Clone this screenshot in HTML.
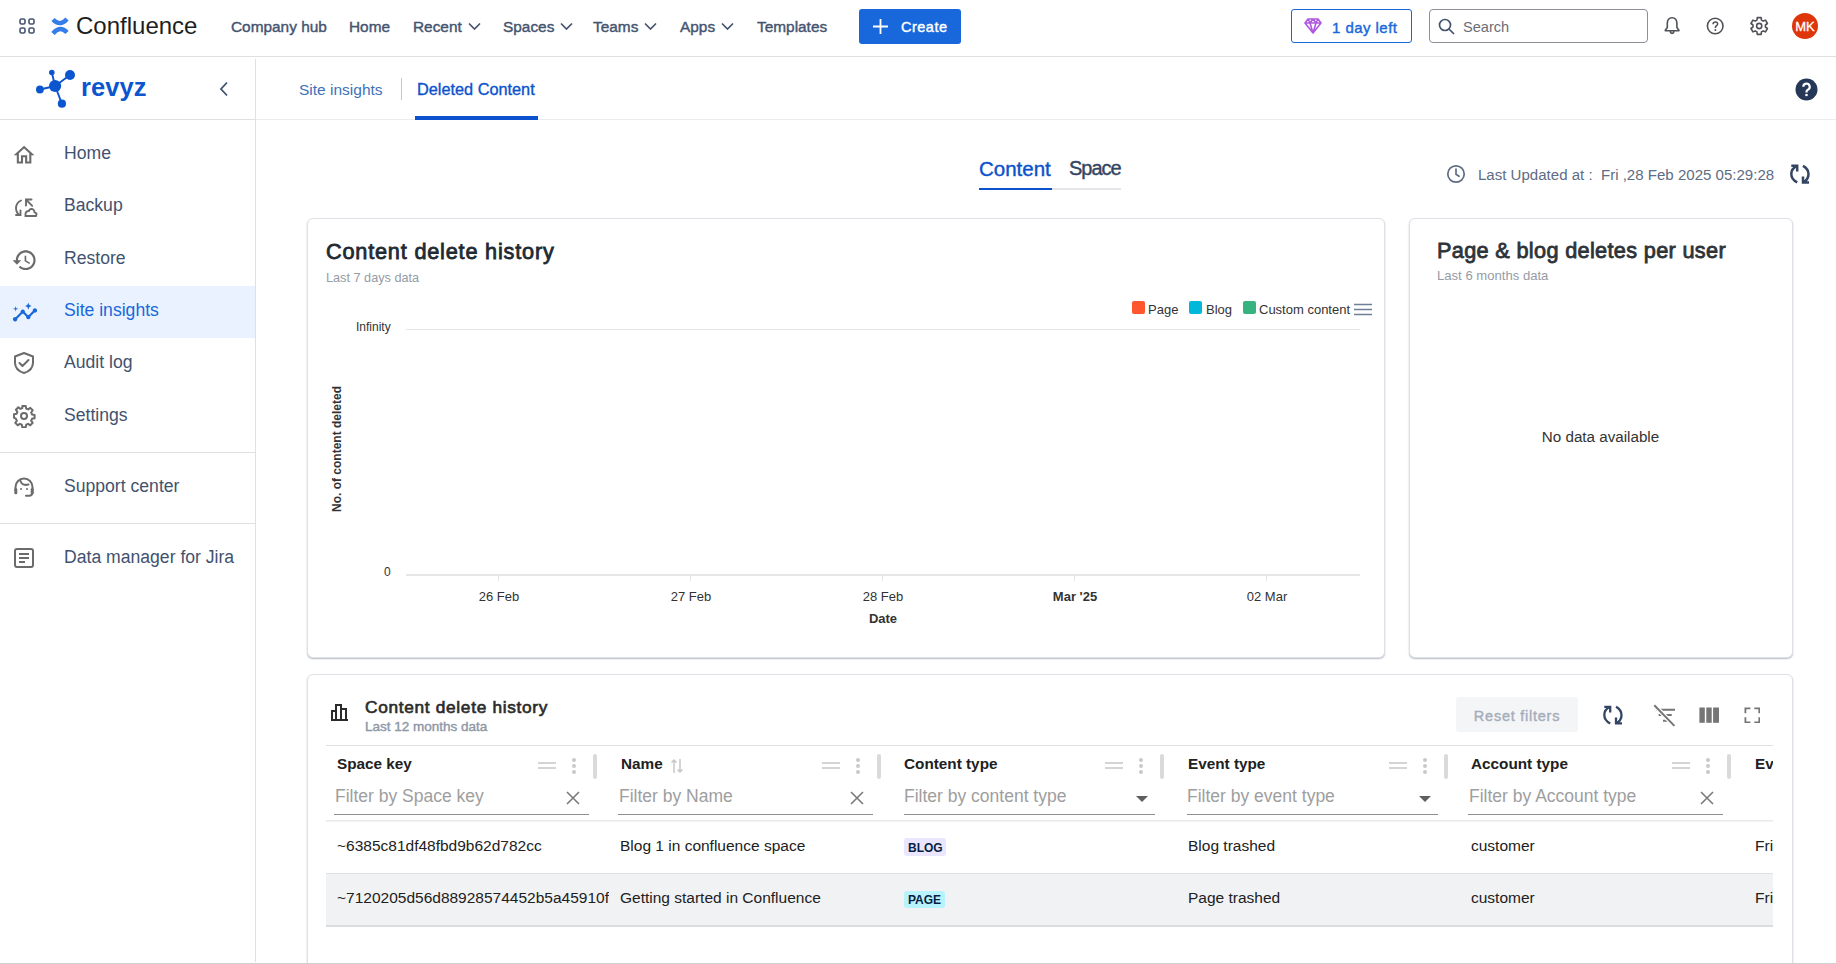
<!DOCTYPE html>
<html><head><meta charset="utf-8">
<style>
*{box-sizing:border-box;margin:0;padding:0}
html,body{width:1836px;height:964px;overflow:hidden;background:#fff;font-family:"Liberation Sans",sans-serif;color:#172B4D}
.abs{position:absolute}
.top{position:absolute;left:0;top:0;width:1836px;height:57px;border-bottom:1px solid #E0E0E0;background:#fff}
.nav{position:absolute;top:18px;font-size:15.4px;color:#44546F;white-space:nowrap;-webkit-text-stroke:0.4px #44546F}
.m{-webkit-text-stroke:0.4px currentColor}
.chev{display:inline-block;margin-left:6px;vertical-align:2px}
.side{position:absolute;left:0;top:57px;width:256px;height:907px}
.side:after{content:"";position:absolute;left:255px;top:2px;width:1px;height:903px;background:#E0E0E0}
.item{position:absolute;left:0;width:255px;height:52px;font-size:17.6px;color:#42526E}
.item span{position:absolute;left:64px;top:15px}
.item svg{position:absolute;left:12px;top:14px}
.card{position:absolute;border:1px solid #DFE1E6;border-radius:6px;background:#fff;box-shadow:0 1px 1.5px rgba(9,30,66,0.3)}
.th{position:absolute;top:755px;font-size:15.3px;font-weight:bold;color:#212121;white-space:nowrap}
.ph{position:absolute;top:786px;font-size:17.5px;color:#9E9E9E;white-space:nowrap}
.td{position:absolute;font-size:15.5px;color:#212121;white-space:nowrap}
</style></head><body>
<!-- TOP NAV -->
<div class="top">
  <svg class="abs" style="left:19px;top:18px" width="16" height="16" viewBox="0 0 16 16" fill="none" stroke="#44546F" stroke-width="1.6"><rect x="1" y="1" width="5" height="5" rx="1.5"/><rect x="10" y="1" width="5" height="5" rx="1.5"/><rect x="1" y="10" width="5" height="5" rx="1.5"/><rect x="10" y="10" width="5" height="5" rx="1.5"/></svg>
  <svg class="abs" style="left:48px;top:14px" width="24" height="24" viewBox="0 0 24 24" fill="none" stroke="#357DE8" stroke-width="4.4"><path d="M5 5.5Q12 13 19 5M5 19.5Q12 11 19 18.5"/></svg>
  <div class="abs" style="left:76px;top:12px;font-size:24px;color:#1E1F21">Confluence</div>
  <div class="nav" style="left:231px">Company hub</div>
  <div class="nav" style="left:349px">Home</div>
  <div class="nav" style="left:413px">Recent<svg class="chev" width="13" height="8" viewBox="0 0 13 8" fill="none" stroke="#44546F" stroke-width="1.7"><path d="M1 1.5 6.5 7 12 1.5"/></svg></div>
  <div class="nav" style="left:503px">Spaces<svg class="chev" width="13" height="8" viewBox="0 0 13 8" fill="none" stroke="#44546F" stroke-width="1.7"><path d="M1 1.5 6.5 7 12 1.5"/></svg></div>
  <div class="nav" style="left:593px">Teams<svg class="chev" width="13" height="8" viewBox="0 0 13 8" fill="none" stroke="#44546F" stroke-width="1.7"><path d="M1 1.5 6.5 7 12 1.5"/></svg></div>
  <div class="nav" style="left:680px">Apps<svg class="chev" width="13" height="8" viewBox="0 0 13 8" fill="none" stroke="#44546F" stroke-width="1.7"><path d="M1 1.5 6.5 7 12 1.5"/></svg></div>
  <div class="nav" style="left:757px">Templates</div>
  <div class="abs" style="left:859px;top:9px;width:102px;height:35px;background:#1868DB;border-radius:3px"></div>
  <svg class="abs" style="left:872px;top:18px" width="17" height="17" viewBox="0 0 17 17" stroke="#fff" stroke-width="1.8"><path d="M8.5 1v15M1 8.5h15"/></svg>
  <div class="abs m" style="left:901px;top:19px;font-size:14.5px;letter-spacing:0.5px;color:#fff">Create</div>

  <div class="abs" style="left:1291px;top:9px;width:121px;height:34px;border:1px solid #1868DB;border-radius:3px"></div>
  <svg class="abs" style="left:1304px;top:18px" width="18" height="16" viewBox="0 0 18 16" fill="none" stroke="#AF59E1" stroke-width="1.6" stroke-linejoin="round"><path d="M4 1h10l3 4-8 10L1 5z M1 5h16 M6 5l3 10 3-10 M4 1l2 4 3-4 3 4 2-4"/></svg>
  <div class="abs m" style="left:1332px;top:19px;font-size:15px;letter-spacing:0.45px;color:#1868DB">1 day left</div>

  <div class="abs" style="left:1429px;top:9px;width:219px;height:34px;border:1px solid #8C8F97;border-radius:4px"></div>
  <svg class="abs" style="left:1438px;top:18px" width="17" height="17" viewBox="0 0 17 17" fill="none" stroke="#44546F" stroke-width="1.7"><circle cx="7" cy="7" r="5.5"/><path d="M11 11l5 5"/></svg>
  <div class="abs" style="left:1463px;top:19px;font-size:14.6px;color:#6B6E76">Search</div>

  <svg class="abs" style="left:1663px;top:16px" width="19" height="20" viewBox="0 0 19 20" fill="none" stroke="#505258" stroke-width="1.6" stroke-linejoin="round"><path d="M9.1 1.8C6 1.8 4.3 4 4.3 7.3V11.5L2.3 14.2V14.8H15.9V14.2L13.9 11.5V7.3C13.9 4 12.2 1.8 9.1 1.8Z M7.4 15.6C7.4 17.9 10.8 17.9 10.8 15.6"/></svg>
  <svg class="abs" style="left:1705px;top:16px" width="20" height="20" viewBox="0 0 20 20" fill="none" stroke="#505258" stroke-width="1.6"><circle cx="10.2" cy="10" r="7.8"/><path d="M8 8.2C8 6.8 9 5.9 10.3 5.9 11.7 5.9 12.7 6.8 12.7 8.1 12.7 9.6 10.5 9.8 10.4 11.4V12" stroke-width="1.5"/><circle cx="10.35" cy="14" r="1" fill="#505258" stroke="none"/></svg>
  <svg class="abs" style="left:1749px;top:16px" width="21" height="20" viewBox="0 0 21 20" fill="none" stroke="#505258" stroke-width="1.6" stroke-linejoin="round"><path d="M8.27 1.62 L12.13 1.62 L12.46 4.12 L14.16 5.10 L16.49 4.13 L18.42 7.49 L16.42 9.01 L16.42 10.99 L18.42 12.51 L16.49 15.87 L14.16 14.90 L12.46 15.88 L12.13 18.38 L8.27 18.38 L7.94 15.88 L6.24 14.90 L3.91 15.87 L1.98 12.51 L3.98 10.99 L3.98 9.01 L1.98 7.49 L3.91 4.13 L6.24 5.10 L7.94 4.12Z"/><circle cx="10.2" cy="10" r="2.6"/></svg>
  <div class="abs m" style="left:1792px;top:13px;width:26px;height:26px;border-radius:50%;background:#DE350B;color:#fff;font-size:13px;text-align:center;line-height:27px;-webkit-text-stroke:0.3px #fff">MK</div>
</div>

<!-- SIDEBAR -->
<div class="side">
  <div class="abs" style="left:0;top:62px;width:255px;height:1px;background:#E0E0E0"></div>
  <svg class="abs" style="left:30px;top:7px" width="48" height="48" viewBox="30 64 48 48">
    <g stroke="#0B55CF" stroke-width="1.9"><path d="M55.1 86 L51.8 72.5 M55.1 86 L70 75 M55.1 86 L39.9 89.5 M55.1 86 L61.9 103.7"/></g>
    <g fill="#0B55CF"><circle cx="55.1" cy="86" r="6.1"/><circle cx="51.8" cy="72.5" r="2.8"/><circle cx="70" cy="75" r="5"/><circle cx="39.9" cy="89.5" r="3.9"/><circle cx="61.9" cy="103.7" r="4.1"/></g>
  </svg>
  <div class="abs" style="left:81px;top:16.3px;font-size:25.5px;font-weight:bold;color:#0B55CF;letter-spacing:0.1px">revyz</div>
  <svg class="abs" style="left:218px;top:24px" width="12" height="16" viewBox="0 0 12 16" fill="none" stroke="#42526E" stroke-width="1.8"><path d="M9 1.5 3 8l6 6.5"/></svg>

  <div class="item" style="top:71px"><svg width="24" height="24" viewBox="0 0 24 24" fill="#6B6B6B"><g transform="translate(-0.4,0.7) scale(1.04)"><path d="M12 5.69l5 4.5V18h-2v-6H9v6H7v-7.81l5-4.5M12 3L2 12h3v8h6v-6h2v6h6v-8h3L12 3z"/></g></svg><span>Home</span></div>
  <div class="item" style="top:123px"><svg style="left:13px;top:16px" width="26" height="24" viewBox="0 0 26 24" fill="none" stroke="#6B6B6B" stroke-width="1.9" stroke-linecap="round"><path d="M8 4.5C4.5 6 3 9 3 12.5c0 2.5 1 4.5 2.5 6 M3 19h4.5v-4.5 M13 9.5V3.5h5.5 M13.2 3.8l6 6 M12.5 20h10.5c1-1.5.5-3.5-1.5-3.8 0-2.3-1.8-3.5-3.5-3.2-1 .2-2 1-2.2 2-1.8-.2-3.3 1.3-3.3 3z"/></svg><span>Backup</span></div>
  <div class="item" style="top:176px"><svg width="26" height="26" viewBox="0 0 26 26" fill="#6B6B6B"><g transform="translate(-0.6,0) scale(1.1)"><path d="M13 3c-4.97 0-9 4.03-9 9H1l3.89 3.89.07.14L9 12H6c0-3.87 3.13-7 7-7s7 3.13 7 7-3.13 7-7 7c-1.93 0-3.68-.79-4.94-2.06l-1.42 1.42C8.27 19.990 10.51 21 13 21c4.97 0 9-4.030 9-9s-4.03-9-9-9zm-1 5v5l4.28 2.54.72-1.21-3.5-2.08V8H12z"/></g></svg><span>Restore</span></div>
  <div class="item" style="top:229px;background:#E9F2FE;color:#1868DB"><svg width="26" height="24" viewBox="0 0 26 24" fill="#1868DB"><g transform="translate(-0.2,-0.5) scale(1.1)"><path d="M21 8c-1.45 0-2.26 1.44-1.93 2.51l-3.55 3.56c-.3-.09-.74-.09-1.04 0l-2.55-2.55C12.270 10.45 11.46 9 10 9c-1.45 0-2.27 1.44-1.930 2.52l-4.56 4.55C2.44 15.74 1 16.55 1 18c0 1.1.9 2 2 2 1.45 0 2.26-1.44 1.93-2.51l4.55-4.56c.3.09.74.09 1.04 0l2.550 2.55C12.73 16.55 13.54 18 15 18c1.45 0 2.27-1.44 1.93-2.52l3.56-3.55c1.07.33 2.51-.48 2.51-1.93 0-1.1-.9-2-2-2z"/><path d="M15 9l.94-2.07L18 6l-2.06-.93L15 3l-.92 2.07L12 6l2.08.93z M3.5 11L4 9l2-.5L4 8l-.5-2L3 8l-2 .5L3 9z"/></g></svg><span style="top:14px">Site insights</span></div>
  <div class="item" style="top:280px"><svg width="24" height="24" viewBox="0 0 24 24" fill="none" stroke="#6B6B6B" stroke-width="2" stroke-linejoin="round" stroke-linecap="round"><path d="M12 2 3 5.5v6c0 5.5 4 9 9 10.5 5-1.5 9-5 9-10.5v-6z M7.5 12l3 3 6-6"/></svg><span>Audit log</span></div>
  <div class="item" style="top:333px"><svg width="24" height="24" viewBox="0 0 24 24" fill="none" stroke="#6B6B6B" stroke-width="2"><circle cx="12" cy="12" r="3"/><path d="M10.3 2h3.4l.5 2.6 1.9.8 2.2-1.5 2.4 2.4-1.5 2.2.8 1.9 2.6.5v3.4l-2.6.5-.8 1.9 1.5 2.2-2.4 2.4-2.2-1.5-1.9.8-.5 2.6h-3.4l-.5-2.6-1.9-.8-2.2 1.5-2.4-2.4 1.5-2.2-.8-1.9L2 13.7v-3.4l2.6-.5.8-1.9-1.5-2.2 2.4-2.4 2.2 1.5 1.9-.8z" stroke-linejoin="round"/></svg><span>Settings</span></div>
  <div class="abs" style="left:0;top:395px;width:255px;height:1px;background:#E0E0E0"></div>
  <div class="item" style="top:404px"><svg width="24" height="24" viewBox="0 0 24 24" fill="none" stroke="#6B6B6B" stroke-width="2" stroke-linecap="round"><path d="M3.5 15v-3a8.5 8.5 0 0 1 17 0v3 M20.5 17c0 2.3-1.3 3.7-3.5 3.7h-3 M8.5 6C9.5 9 12.5 10.5 16.5 9.5"/><rect x="2.3" y="13.2" width="3" height="6" rx="1.2" fill="#6B6B6B" stroke="none"/><rect x="18.7" y="13.2" width="3" height="6" rx="1.2" fill="#6B6B6B" stroke="none"/><circle cx="9" cy="14" r="1" fill="#6B6B6B" stroke="none"/><circle cx="15" cy="14" r="1" fill="#6B6B6B" stroke="none"/></svg><span>Support center</span></div>
  <div class="abs" style="left:0;top:466px;width:255px;height:1px;background:#E0E0E0"></div>
  <div class="item" style="top:475px"><svg width="24" height="24" viewBox="0 0 24 24" fill="none" stroke="#6B6B6B" stroke-width="2" stroke-linejoin="round"><rect x="3" y="3" width="18" height="18" rx="2"/><path d="M7 8h10M7 12h10M7 16h6"/></svg><span>Data manager for Jira</span></div>
</div>

<!-- MAIN -->
<div id="main">
  <!-- subtabs -->
  <div class="abs" style="left:299px;top:81px;font-size:15.5px;color:#3D71B8">Site insights</div>
  <div class="abs" style="left:401px;top:78px;width:1px;height:22px;background:#C1C7D0"></div>
  <div class="abs m" style="left:417px;top:80px;font-size:16.3px;color:#0B52CC;-webkit-text-stroke:0.35px #0B52CC">Deleted Content</div>
  <div class="abs" style="left:415px;top:116px;width:123px;height:4px;background:#0B52CC;z-index:2"></div>
  <div class="abs" style="left:256px;top:119px;width:1580px;height:1px;background:#EBECF0"></div>
  <svg class="abs" style="left:1795px;top:78px" width="23" height="23" viewBox="0 0 23 23"><circle cx="11.5" cy="11.5" r="11" fill="#253858"/><path d="M8.3 8.8a3.2 3.2 0 1 1 4.6 2.9c-.9.4-1.4 1-1.4 1.9v.8" fill="none" stroke="#fff" stroke-width="2.2"/><circle cx="11.5" cy="17" r="1.3" fill="#fff"/></svg>

  <!-- content/space tabs -->
  <div class="abs m" style="left:979px;top:157px;font-size:20.5px;color:#0B52CC">Content</div>
  <div class="abs m" style="left:1069px;top:157px;font-size:20px;letter-spacing:-1px;color:#344563">Space</div>
  <div class="abs" style="left:979px;top:188px;width:142px;height:2px;background:#E4E6EA"></div>
  <div class="abs" style="left:979px;top:188px;width:73px;height:2px;background:#0B52CC"></div>

  <svg class="abs" style="left:1446px;top:164px" width="20" height="20" viewBox="0 0 20 20" fill="none" stroke="#5E6C84" stroke-width="1.7" stroke-linecap="round"><circle cx="10" cy="10" r="8.2"/><path d="M10 5v5.3l3 2"/></svg>
  <div class="abs" style="left:1478px;top:166px;font-size:15.05px;color:#5E6C84">Last Updated at :&nbsp; Fri ,28 Feb 2025 05:29:28</div>
  <svg class="abs" style="left:1787px;top:162px" width="26" height="24" viewBox="0 0 26 24" fill="none" stroke="#344563" stroke-width="2.5"><path d="M10.2 3.8C6.3 5.5 4.3 8.5 4.3 12c0 3.4 2 6.4 5.9 8.4 M4.3 3.8h5.9v5.8 M16 3.8c3.7 2 5.5 5 5.5 8.4 0 3.4-2 6.4-5.5 8.2 M16 14.5v5.9h6"/></svg>

  <!-- card 1 -->
  <div class="card" style="left:307px;top:218px;width:1078px;height:440px"></div>
  <div class="abs" style="left:326px;top:239px;font-size:21.7px;letter-spacing:0.8px;-webkit-text-stroke:0.8px #1F2A33;color:#1F2A33">Content delete history</div>
  <div class="abs" style="left:326px;top:271px;font-size:12.7px;color:#959BA6">Last 7 days data</div>
  <div class="abs" style="left:1132px;top:301px;width:13px;height:13px;border-radius:2px;background:#FF5630"></div>
  <div class="abs" style="left:1148px;top:302px;font-size:13px;color:#333">Page</div>
  <div class="abs" style="left:1189px;top:301px;width:13px;height:13px;border-radius:2px;background:#00B8D9"></div>
  <div class="abs" style="left:1206px;top:302px;font-size:13px;color:#333">Blog</div>
  <div class="abs" style="left:1243px;top:301px;width:13px;height:13px;border-radius:2px;background:#36B37E"></div>
  <div class="abs" style="left:1259px;top:302px;font-size:13px;color:#333">Custom content</div>
  <svg class="abs" style="left:1354px;top:303px" width="18" height="13" viewBox="0 0 18 13" stroke="#6E7F96" stroke-width="1.6"><path d="M0 1.5h18M0 6.5h18M0 11.5h18"/></svg>

  <div class="abs" style="left:356px;top:320px;font-size:12px;color:#333">Infinity</div>
  <div class="abs" style="left:406px;top:329px;width:954px;height:1px;background:#E6E6E6"></div>
  <div class="abs" style="left:384px;top:565px;font-size:12px;color:#333">0</div>
  <div class="abs" style="left:406px;top:574px;width:954px;height:2px;background:#E6E6E6"></div>
  <div class="abs" style="left:498px;top:575px;width:1px;height:6px;background:#E6E6E6"></div>
  <div class="abs" style="left:690px;top:575px;width:1px;height:6px;background:#E6E6E6"></div>
  <div class="abs" style="left:882px;top:575px;width:1px;height:6px;background:#E6E6E6"></div>
  <div class="abs" style="left:1074px;top:575px;width:1px;height:6px;background:#E6E6E6"></div>
  <div class="abs" style="left:1266px;top:575px;width:1px;height:6px;background:#E6E6E6"></div>
  <div class="abs" style="left:439px;top:589px;width:120px;text-align:center;font-size:13px;color:#333">26 Feb</div>
  <div class="abs" style="left:631px;top:589px;width:120px;text-align:center;font-size:13px;color:#333">27 Feb</div>
  <div class="abs" style="left:823px;top:589px;width:120px;text-align:center;font-size:13px;color:#333">28 Feb</div>
  <div class="abs" style="left:1015px;top:589px;width:120px;text-align:center;font-size:13px;font-weight:bold;color:#333">Mar '25</div>
  <div class="abs" style="left:1207px;top:589px;width:120px;text-align:center;font-size:13px;color:#333">02 Mar</div>
  <div class="abs" style="left:823px;top:611px;width:120px;text-align:center;font-size:13px;font-weight:bold;color:#333">Date</div>
  <div class="abs" style="left:267px;top:442px;width:140px;text-align:center;font-size:12px;font-weight:bold;color:#333;white-space:nowrap;transform:rotate(-90deg)">No. of content deleted</div>

  <!-- card 2 -->
  <div class="card" style="left:1409px;top:218px;width:384px;height:440px"></div>
  <div class="abs" style="left:1437px;top:238px;font-size:21.7px;letter-spacing:0.33px;-webkit-text-stroke:0.8px #2E3338;color:#2E3338">Page &amp; blog deletes per user</div>
  <div class="abs" style="left:1437px;top:268px;font-size:13.1px;color:#959BA6">Last 6 months data</div>
  <div class="abs" style="left:1409px;top:428px;width:383px;text-align:center;font-size:15.2px;color:#333">No data available</div>

  <!-- card 3 -->
  <div class="card" style="left:307px;top:674px;width:1486px;height:320px"></div>
  <svg class="abs" style="left:331px;top:703px" width="17" height="18" viewBox="0 0 17 18" fill="none" stroke="#2B2B2B" stroke-width="2"><path d="M1 17V8h4v9 M5 17V2h5v15 M10 17V6h5v11 M0 17h17"/></svg>
  <div class="abs" style="left:365px;top:697px;font-size:17.3px;letter-spacing:0.68px;-webkit-text-stroke:0.65px #2B2B2B;color:#2B2B2B">Content delete history</div>
  <div class="abs m" style="left:365px;top:719px;font-size:13.5px;color:#8E97A6">Last 12 months data</div>
  <div class="abs" style="left:1456px;top:697px;width:122px;height:35px;border-radius:3px;background:#F4F5F7"></div>
  <div class="abs m" style="left:1456px;top:708px;width:122px;text-align:center;font-size:14.5px;letter-spacing:0.75px;color:#A5ADBA">Reset filters</div>
  <svg class="abs" style="left:1600px;top:703px" width="26" height="24" viewBox="0 0 26 24" fill="none" stroke="#344563" stroke-width="2.3"><path d="M10.2 3.8C6.3 5.5 4.3 8.5 4.3 12c0 3.4 2 6.4 5.9 8.4 M4.3 3.8h5.9v5.8 M16 3.8c3.7 2 5.5 5 5.5 8.4 0 3.4-2 6.4-5.5 8.2 M16 14.5v5.9h6"/></svg>
  <svg class="abs" style="left:1650px;top:700px" width="30" height="30" viewBox="1650 700 30 30" fill="none" stroke="#757575" stroke-width="2"><path d="M1656 709.7h19 M1658.7 715h13 M1663 720.7h5.5"/><path d="M1654.3 705.3 1674.4 725.9" stroke="#fff" stroke-width="4.5"/><path d="M1654.3 705.3 1674.4 725.9"/></svg>
  <svg class="abs" style="left:1699px;top:707px" width="20" height="16" viewBox="0 0 20 16" fill="#757575"><rect x="0.4" y="0.5" width="5.4" height="15.3"/><rect x="7.3" y="0.5" width="5.4" height="15.3"/><rect x="14.1" y="0.5" width="5.9" height="15.3"/></svg>
  <svg class="abs" style="left:1744px;top:707px" width="16" height="16" viewBox="0 0 16 16" fill="none" stroke="#757575" stroke-width="1.8"><path d="M1.4 6.3V1.4h5 M10.3 1.4h5v4.9 M15.3 10.3v5h-5 M6.4 15.3h-5v-5"/></svg>

  <div class="abs" style="left:326px;top:745px;width:1447px;height:1px;background:#E0E0E0"></div>
  <div class="th" style="left:337px">Space key</div><svg class="abs" style="left:538px;top:761px" width="18" height="8" viewBox="0 0 18 8" stroke="#D4D4D4" stroke-width="2"><path d="M0 2h18M0 7h18"/></svg><svg class="abs" style="left:571px;top:757px" width="6" height="18" viewBox="0 0 6 18" fill="#C9C9C9"><circle cx="3" cy="3" r="2"/><circle cx="3" cy="9" r="2"/><circle cx="3" cy="15" r="2"/></svg><div class="abs" style="left:593px;top:754px;width:4px;height:25px;border-radius:2px;background:#DADADA"></div><div class="ph" style="left:335px">Filter by Space key</div><div class="abs" style="left:334px;top:814px;width:255px;height:1px;background:#8F8F8F"></div><svg class="abs" style="left:566px;top:791px" width="14" height="14" viewBox="0 0 14 14" stroke="#7A7A7A" stroke-width="1.6"><path d="M1 1l12 12M13 1 1 13"/></svg><div class="th" style="left:621px">Name</div><svg class="abs" style="left:670px;top:758px" width="14" height="16" viewBox="0 0 14 16" fill="none" stroke="#C7C7C7" stroke-width="1.5"><path d="M4 15V2M1.5 4.5 4 2l2.5 2.5 M10 1v13M7.5 11.5 10 14l2.5-2.5"/></svg><svg class="abs" style="left:822px;top:761px" width="18" height="8" viewBox="0 0 18 8" stroke="#D4D4D4" stroke-width="2"><path d="M0 2h18M0 7h18"/></svg><svg class="abs" style="left:855px;top:757px" width="6" height="18" viewBox="0 0 6 18" fill="#C9C9C9"><circle cx="3" cy="3" r="2"/><circle cx="3" cy="9" r="2"/><circle cx="3" cy="15" r="2"/></svg><div class="abs" style="left:877px;top:754px;width:4px;height:25px;border-radius:2px;background:#DADADA"></div><div class="ph" style="left:619px">Filter by Name</div><div class="abs" style="left:618px;top:814px;width:255px;height:1px;background:#8F8F8F"></div><svg class="abs" style="left:850px;top:791px" width="14" height="14" viewBox="0 0 14 14" stroke="#7A7A7A" stroke-width="1.6"><path d="M1 1l12 12M13 1 1 13"/></svg><div class="th" style="left:904px">Content type</div><svg class="abs" style="left:1105px;top:761px" width="18" height="8" viewBox="0 0 18 8" stroke="#D4D4D4" stroke-width="2"><path d="M0 2h18M0 7h18"/></svg><svg class="abs" style="left:1138px;top:757px" width="6" height="18" viewBox="0 0 6 18" fill="#C9C9C9"><circle cx="3" cy="3" r="2"/><circle cx="3" cy="9" r="2"/><circle cx="3" cy="15" r="2"/></svg><div class="abs" style="left:1160px;top:754px;width:4px;height:25px;border-radius:2px;background:#DADADA"></div><div class="ph" style="left:904px">Filter by content type</div><div class="abs" style="left:904px;top:814px;width:251px;height:1px;background:#8F8F8F"></div><svg class="abs" style="left:1136px;top:796px" width="12" height="6" viewBox="0 0 12 6" fill="#5F5F5F"><path d="M0 0h12L6 6z"/></svg><div class="th" style="left:1188px">Event type</div><svg class="abs" style="left:1389px;top:761px" width="18" height="8" viewBox="0 0 18 8" stroke="#D4D4D4" stroke-width="2"><path d="M0 2h18M0 7h18"/></svg><svg class="abs" style="left:1422px;top:757px" width="6" height="18" viewBox="0 0 6 18" fill="#C9C9C9"><circle cx="3" cy="3" r="2"/><circle cx="3" cy="9" r="2"/><circle cx="3" cy="15" r="2"/></svg><div class="abs" style="left:1444px;top:754px;width:4px;height:25px;border-radius:2px;background:#DADADA"></div><div class="ph" style="left:1187px">Filter by event type</div><div class="abs" style="left:1187px;top:814px;width:251px;height:1px;background:#8F8F8F"></div><svg class="abs" style="left:1419px;top:796px" width="12" height="6" viewBox="0 0 12 6" fill="#5F5F5F"><path d="M0 0h12L6 6z"/></svg><div class="th" style="left:1471px">Account type</div><svg class="abs" style="left:1672px;top:761px" width="18" height="8" viewBox="0 0 18 8" stroke="#D4D4D4" stroke-width="2"><path d="M0 2h18M0 7h18"/></svg><svg class="abs" style="left:1705px;top:757px" width="6" height="18" viewBox="0 0 6 18" fill="#C9C9C9"><circle cx="3" cy="3" r="2"/><circle cx="3" cy="9" r="2"/><circle cx="3" cy="15" r="2"/></svg><div class="abs" style="left:1727px;top:754px;width:4px;height:25px;border-radius:2px;background:#DADADA"></div><div class="ph" style="left:1469px">Filter by Account type</div><div class="abs" style="left:1468px;top:814px;width:255px;height:1px;background:#8F8F8F"></div><svg class="abs" style="left:1700px;top:791px" width="14" height="14" viewBox="0 0 14 14" stroke="#7A7A7A" stroke-width="1.6"><path d="M1 1l12 12M13 1 1 13"/></svg>
  <div class="th" style="left:1755px;width:18px;overflow:hidden">Event</div>
  <div class="abs" style="left:326px;top:820px;width:1447px;height:2px;background:linear-gradient(#E6E6E6,#F7F7F7)"></div>

  <div class="abs" style="left:326px;top:873px;width:1447px;height:1px;background:#E0E0E0"></div>
  <div class="abs" style="left:326px;top:874px;width:1447px;height:51px;background:#F1F2F4"></div>
  <div class="abs" style="left:326px;top:925px;width:1447px;height:2px;background:#DCDCDC"></div>
  <div class="td" style="left:337px;top:837px">~6385c81df48fbd9b62d782cc</div>
  <div class="td" style="left:620px;top:837px">Blog 1 in confluence space</div>
  <div class="abs" style="left:904px;top:838px;height:18px;padding:0 3.5px 0 4px;border-radius:3px;background:#EAE6FF;font-size:12px;font-weight:bold;line-height:20px;color:#091E42">BLOG</div>
  <div class="td" style="left:1188px;top:837px">Blog trashed</div>
  <div class="td" style="left:1471px;top:837px">customer</div>
  <div class="td" style="left:1755px;top:837px;width:18px;overflow:hidden">Fri,</div>
  <div class="td" style="left:337px;top:889px;width:272px;overflow:hidden">~7120205d56d88928574452b5a45910f</div>
  <div class="td" style="left:620px;top:889px">Getting started in Confluence</div>
  <div class="abs" style="left:904px;top:891px;height:17px;padding:0 3.5px 0 4px;border-radius:3px;background:#B8F3FC;font-size:12px;font-weight:bold;line-height:19px;color:#091E42">PAGE</div>
  <div class="td" style="left:1188px;top:889px">Page trashed</div>
  <div class="td" style="left:1471px;top:889px">customer</div>
  <div class="td" style="left:1755px;top:889px;width:18px;overflow:hidden">Fri,</div>
  <div class="abs" style="left:0;top:963px;width:1836px;height:1px;background:#D0D0D0"></div>
</div>
</body></html>
